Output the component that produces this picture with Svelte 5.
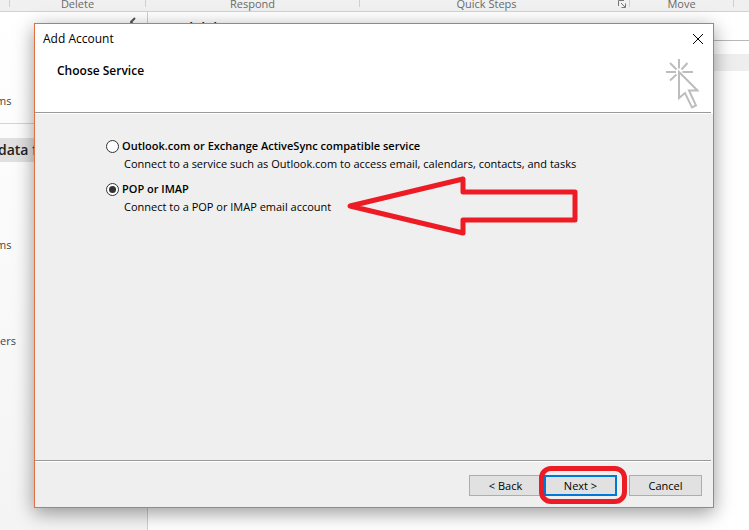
<script lang="ts">
	const ribbonGroups = [
		{ name: "", width: 10 },
		{ name: "Delete", width: 136 },
		{ name: "Respond", width: 214 },
		{ name: "Quick Steps", width: 270, launcher: true },
		{ name: "Move", width: 104 }
	];

	const services = [
		{
			id: "eas",
			name: "Outlook.com or Exchange ActiveSync compatible service",
			description:
				"Connect to a service such as Outlook.com to access email, calendars, contacts, and tasks"
		},
		{
			id: "pop",
			name: "POP or IMAP",
			description: "Connect to a POP or IMAP email account"
		}
	];

	let selected = $state("pop");
</script>

<div class="outlook">
	<div class="ribbon">
		{#each ribbonGroups as group}
			<div class="group" class:has-launcher={group.launcher} style="width: {group.width}px">
				<span>{group.name}</span>
				{#if group.launcher}
					<svg class="launcher" width="8" height="8" viewBox="0 0 8 8">
						<path d="M0.5 6V0.5H6M3 3l4 4M7.5 3.5v4h-4" />
					</svg>
				{/if}
			</div>
		{/each}
	</div>

	<div class="workspace">
		<nav class="folders">
			<div class="collapse">
				<svg width="6" height="10" viewBox="0 0 6 10"><path d="M5 1L1 5l4 4" /></svg>
			</div>
			<div class="folder first"><span>ms</span></div>
			<div class="data-file">data f</div>
			<div class="folder"><span>ms</span></div>
			<div class="folder">ers</div>
		</nav>
		<main class="messages">
			<div class="subject">4alalal5</div>
			<div class="rule"></div>
			<div class="band"></div>
		</main>
	</div>

	<div class="dialog" role="dialog" aria-labelledby="dialog-title">
		<div class="title-bar">
			<span id="dialog-title">Add Account</span>
			<button class="close" aria-label="Close">
				<svg width="10" height="10" viewBox="0 0 10 10"><path d="M0 0l10 10M10 0L0 10" /></svg>
			</button>
		</div>
		<header>
			<h1>Choose Service</h1>
			<svg class="pointer" width="34" height="50" viewBox="0 0 34 50">
				<path d="M14 0v9.500M1 13h10M17.500 13h10.500M5 4l6.500 6.500M22.500 4l-6 6.500M5 21.500l6.500-6" />
				<path d="M14 13v26l6-5 7 14.500 4-2-7-15h8.500z" />
			</svg>
		</header>

		<form>
			<div class="services">
				{#each services as service}
					<div class="service">
						<input
							type="radio"
							name="service"
							id={service.id}
							value={service.id}
							bind:group={selected}
						/>
						<label for={service.id}>{service.name}</label>
						<p>{service.description}</p>
					</div>
				{/each}
			</div>
			<footer>
				<button type="button">&lt; Back</button>
				<button type="button" class="next">Next &gt;</button>
				<button type="button" class="cancel">Cancel</button>
			</footer>
		</form>

		<svg class="arrow" width="232" height="62" viewBox="0 0 232 62">
			<path d="M4 31L117 4v13h112v28H117v13z" />
		</svg>
	</div>
</div>

<style>
	:global(body) {
		margin: 0;
	}

	.outlook {
		position: relative;
		display: flex;
		flex-direction: column;
		min-height: 100vh;
		overflow: hidden;
		background: #fff;
		color: #000;
		font-family: "Open Sans", "Noto Sans", sans-serif;
		font-size: 11px;
		line-height: 18px;
	}

	.ribbon {
		display: flex;
		height: 11px;
		border-bottom: 1px solid #d2d2d2;
		background: #f0f0f0;
		color: #6a6a6a;
	}

	.group {
		display: flex;
		position: relative;
		flex-shrink: 0;
		justify-content: center;
		box-sizing: border-box;
		height: 7px;
		border-right: 1px solid #d0d0d0;
		line-height: 7px;
	}

	.has-launcher {
		padding-right: 16px;
	}

	.launcher {
		position: absolute;
		right: 3px;
		top: 0;
		fill: none;
		stroke: #777;
	}

	.workspace {
		display: flex;
		flex: 1;
	}

	.folders {
		box-sizing: border-box;
		width: 148px;
		border-right: 1px solid #cfcfcf;
		background: linear-gradient(#fff, #f4f4f4);
		color: #444;
	}

	.collapse {
		display: flex;
		justify-content: flex-end;
		padding: 5px 11px 0 0;
	}

	.collapse svg {
		fill: none;
		stroke: #555;
		stroke-width: 2;
	}

	.folder {
		margin-top: 78px;
	}

	/* the pane is scrolled, so long names run off its left edge */
	.folder span {
		margin-left: -4px;
	}

	.folder.first {
		margin-top: 65px;
		padding-bottom: 13px;
		border-bottom: 1px solid #d4d4d4;
	}

	.data-file {
		margin: 14px 0 -4px;
		background: #e0e0e0;
		color: #222;
		font-size: 14px;
		font-weight: 600;
		line-height: 24px;
		text-indent: -2px;
	}

	.messages {
		flex: 1;
	}

	.subject {
		padding: 4px 0 0 25px;
		color: #222;
		font-size: 14px;
		font-weight: 600;
		line-height: 24px;
	}

	.rule {
		border-bottom: 1px solid #b8b8b8;
	}

	.band {
		height: 17px;
		margin-top: 13px;
		background: #eee;
	}

	.dialog {
		position: absolute;
		inset: 23px 35px 22px 34px;
		display: flex;
		flex-direction: column;
		border: 1px solid #e0703f;
		background: #fff;
		box-shadow: 0 5px 18px rgba(0, 0, 0, 0.4);
	}

	.title-bar {
		display: flex;
		align-items: center;
		justify-content: space-between;
		height: 29px;
		padding: 0 10px 0 8px;
		font-size: 12px;
	}

	.close {
		display: flex;
		padding: 0;
		border: 0;
		background: none;
	}

	.close svg {
		fill: none;
		stroke: #000;
	}

	header {
		display: flex;
		justify-content: space-between;
		height: 59px;
		margin-right: 2px;
		padding: 0 12px 0 22px;
		border-bottom: 1px solid #999;
	}

	h1 {
		margin: 9px 0 0;
		font-size: 12px;
		font-weight: 600;
		line-height: 18px;
	}

	.pointer {
		margin-top: 6px;
		fill: none;
		stroke: #bdbdbd;
		stroke-width: 2;
	}

	form {
		display: flex;
		flex: 1;
		flex-direction: column;
		border-top: 1px solid #fff;
		background: #efefef;
	}

	.services {
		display: flex;
		flex: 1;
		flex-direction: column;
		gap: 7px;
		padding: 23px 0 0 71px;
	}

	.service {
		display: grid;
		grid-template-columns: 13px 1fr;
		column-gap: 3px;
		align-items: center;
	}

	input {
		display: grid;
		place-content: center;
		box-sizing: border-box;
		width: 13px;
		height: 13px;
		margin: 0;
		border: 1px solid #333;
		border-radius: 50%;
		appearance: none;
		background: #fff;
	}

	input:checked::before {
		width: 7px;
		height: 7px;
		border-radius: 50%;
		background: #333;
		content: "";
	}

	label {
		font-weight: 600;
	}

	p {
		grid-column: 2;
		margin: 0;
		padding-left: 2px;
	}

	footer {
		display: flex;
		justify-content: flex-end;
		gap: 2px;
		margin-right: 2px;
		padding: 14px 9px 11px;
		border-top: 1px solid #999;
		box-shadow: inset 0 1px #fff;
	}

	footer button {
		box-sizing: border-box;
		width: 73px;
		height: 21px;
		padding: 0;
		border: 1px solid #adadad;
		background: #e1e1e1;
		font: inherit;
		line-height: 18px;
	}

	footer .next {
		position: relative;
		border: 2px solid #0078d7;
	}

	/* red marker ring drawn around the button */
	footer .next::after {
		position: absolute;
		inset: -11px -12px -10px -7px;
		border: 5px solid #ed1c24;
		border-radius: 12px;
		content: "";
	}

	footer .cancel {
		margin-left: 10px;
	}

	.arrow {
		position: absolute;
		top: 151px;
		left: 311px;
		fill: none;
		stroke: #ed1c24;
		stroke-width: 5;
		stroke-linejoin: round;
		pointer-events: none;
	}
</style>
